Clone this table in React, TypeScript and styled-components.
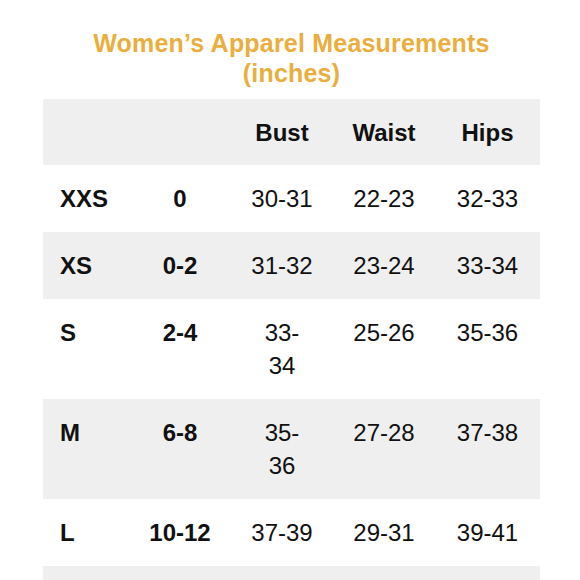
import styled, { createGlobalStyle } from "styled-components"

const GlobalStyle = createGlobalStyle`
  html, body {
    margin: 0;
    padding: 0;
    background: #ffffff;
  }
  body {
    font-family: 'Liberation Sans', Arial, sans-serif;
    color: #111111;
  }
`

const Page = styled.div`
  width: 580px;
  height: 580px;
  overflow: hidden;
  padding: 28px 40px 0 43px;
  box-sizing: border-box;
`

const Title = styled.h1`
  margin: 0 0 11px 0;
  font-size: 25px;
  line-height: 30px;
  font-weight: 700;
  color: #e9ae3d;
  text-align: center;
  letter-spacing: 0.2px;
`

const Table = styled.div`
  display: flex;
  flex-direction: column;
  width: 497px;
`

const Row = styled.div<{ $shaded: boolean; $head?: boolean }>`
  display: grid;
  grid-template-columns: 86px 102px 102px 102px 1fr;
  align-items: start;
  min-height: 33px;
  padding: 17px 0 ${props => (props.$head ? "16px" : "17px")};
  background: ${props => (props.$shaded ? "#efefef" : "#ffffff")};
`

const Cell = styled.div<{ $bold?: boolean; $left?: boolean }>`
  font-size: 24px;
  line-height: 33px;
  font-weight: ${props => (props.$bold ? 700 : 400)};
  text-align: ${props => (props.$left ? "left" : "center")};
  padding-left: ${props => (props.$left ? "17px" : "0")};
`

type SizeRow = {
  label: string
  us: string
  bust: string[]
  waist: string
  hips: string
}

const rows: SizeRow[] = [
  { label: "XXS", us: "0", bust: ["30-31"], waist: "22-23", hips: "32-33" },
  { label: "XS", us: "0-2", bust: ["31-32"], waist: "23-24", hips: "33-34" },
  { label: "S", us: "2-4", bust: ["33-", "34"], waist: "25-26", hips: "35-36" },
  { label: "M", us: "6-8", bust: ["35-", "36"], waist: "27-28", hips: "37-38" },
  { label: "L", us: "10-12", bust: ["37-39"], waist: "29-31", hips: "39-41" },
]

export default function App() {
  return (
    <>
      <GlobalStyle />
      <Page>
        <Title>
          Women’s Apparel Measurements
          <br />
          (inches)
        </Title>
        <Table>
          <Row $shaded={true} $head>
            <Cell $left />
            <Cell />
            <Cell $bold>Bust</Cell>
            <Cell $bold>Waist</Cell>
            <Cell $bold>Hips</Cell>
          </Row>
          {rows.map((r, i) => (
            <Row key={r.label} $shaded={i % 2 === 1}>
              <Cell $bold $left>{r.label}</Cell>
              <Cell $bold>{r.us}</Cell>
              <Cell>
                {r.bust.map((part, j) => (
                  <div key={j}>{part}</div>
                ))}
              </Cell>
              <Cell>{r.waist}</Cell>
              <Cell>{r.hips}</Cell>
            </Row>
          ))}
          {/* next row continues below the fold */}
          <Row $shaded={rows.length % 2 === 1} />
        </Table>
      </Page>
    </>
  )
}
